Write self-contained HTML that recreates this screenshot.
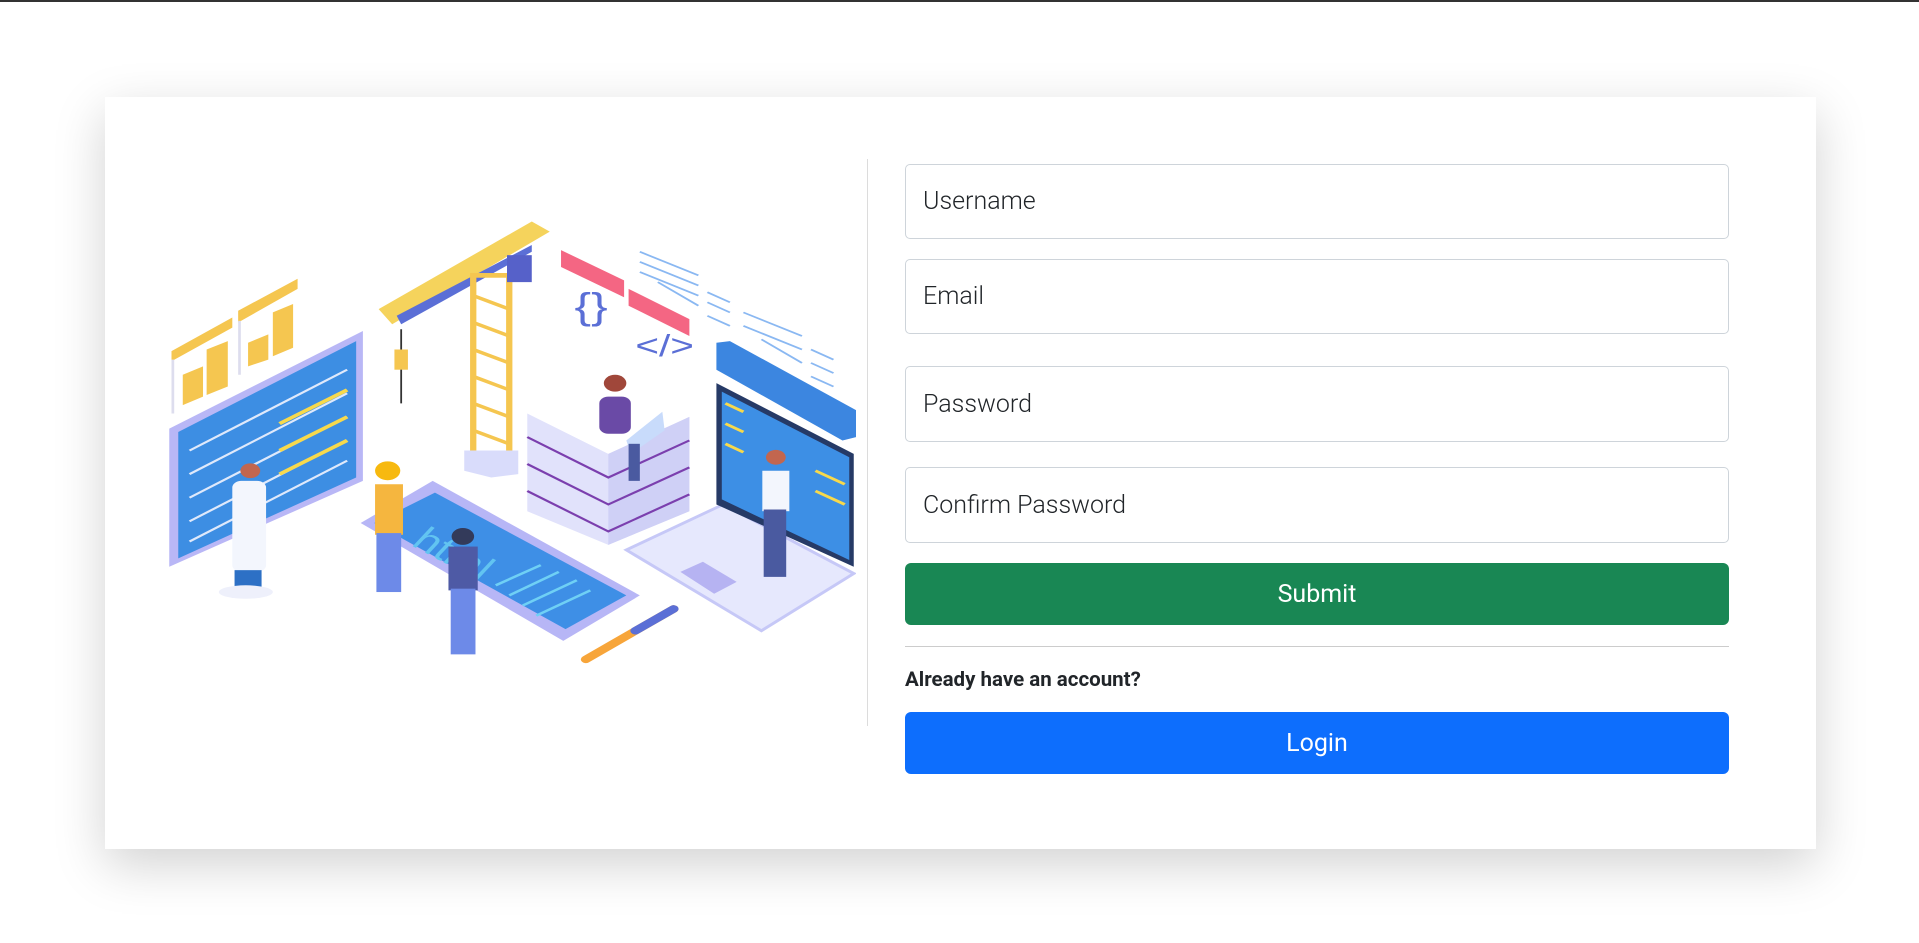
<!DOCTYPE html>
<html><head><meta charset="utf-8"><style>
*{box-sizing:border-box;margin:0;padding:0}
body{width:1919px;height:943px;background:#fff;font-family:Roboto,"Liberation Sans",sans-serif;position:relative;overflow:hidden}
.top{position:absolute;left:0;top:0;width:1919px;height:2px;background:#333}
.card{position:absolute;left:105px;top:97px;width:1711px;height:752px;background:#fff;box-shadow:0 16px 48px rgba(0,0,0,.18)}
.vline{position:absolute;left:867px;top:159px;width:1px;height:567px;background:#dcdcdc}
.inp{position:absolute;left:905px;width:824px;border:1px solid #ced4da;border-radius:5px;font-size:25px;color:#212529;padding-left:17px;display:flex;align-items:center;font-weight:300}
.btn{position:absolute;left:905px;width:824px;border-radius:6px;color:#fff;font-size:25px;display:flex;align-items:center;justify-content:center}
</style></head><body>
<div class="top"></div>
<div class="card"></div>
<svg style="position:absolute;left:158px;top:208px" width="698" height="475" viewBox="0 0 1550 1410" preserveAspectRatio="none">
<polygon points="25,655 455,365 455,810 25,1065" fill="#b9b7f6"/>
<polygon points="45,665 440,395 440,800 45,1040" fill="#3d8ee3"/>
<g stroke="#dfe9fb" stroke-width="6">
<line x1="70" y1="720" x2="420" y2="480"/><line x1="70" y1="790" x2="420" y2="550"/><line x1="70" y1="860" x2="420" y2="620"/><line x1="70" y1="930" x2="420" y2="690"/><line x1="70" y1="990" x2="420" y2="750"/></g>
<g stroke="#f7d94c" stroke-width="10"><line x1="270" y1="640" x2="420" y2="540"/><line x1="270" y1="720" x2="420" y2="620"/><line x1="270" y1="790" x2="420" y2="690"/></g>
<polygon points="30,425 165,325 165,355 30,455" fill="#f5c650"/><rect x="30" y="450" width="6" height="160" fill="#dde"/>
<polygon points="55,495 100,470 100,560 55,585" fill="#f5c650"/><polygon points="108,420 155,395 155,530 108,555" fill="#f5c650"/>
<polygon points="178,305 310,210 310,240 178,340" fill="#f5c650"/><rect x="178" y="335" width="6" height="160" fill="#dde"/>
<polygon points="200,400 245,375 245,450 200,470" fill="#f5c650"/><polygon points="255,310 300,285 300,415 255,440" fill="#f5c650"/>
<polygon points="490,300 830,40 870,70 520,345" fill="#f5d35c"/>
<polygon points="530,320 830,110 830,130 540,345" fill="#5b6fd6"/>
<rect x="700" y="200" width="80" height="550" fill="none" stroke="#f5c650" stroke-width="14"/>
<g stroke="#f5c650" stroke-width="10"><line x1="700" y1="260" x2="780" y2="300"/><line x1="700" y1="340" x2="780" y2="380"/><line x1="700" y1="420" x2="780" y2="460"/><line x1="700" y1="500" x2="780" y2="540"/><line x1="700" y1="580" x2="780" y2="620"/><line x1="700" y1="660" x2="780" y2="700"/></g>
<polygon points="680,720 800,720 800,790 740,800 680,780" fill="#d9dcfb"/>
<rect x="775" y="140" width="55" height="80" fill="#5661c9"/>
<line x1="540" y1="360" x2="540" y2="580" stroke="#333" stroke-width="4"/><rect x="525" y="420" width="30" height="60" fill="#f5c650"/>
<polygon points="895,125 1035,215 1035,265 895,175" fill="#f46683"/>
<polygon points="1045,240 1180,330 1180,380 1045,290" fill="#f46683"/>
<text x="925" y="330" font-size="110" fill="#5b6fd6" font-family="Liberation Sans">{}</text>
<text x="1060" y="440" font-size="90" fill="#5b6fd6" font-family="Liberation Sans">&lt;/&gt;</text>
<g stroke="#8ab8f2" stroke-width="5">
<line x1="1070" y1="130" x2="1200" y2="200"/><line x1="1070" y1="160" x2="1200" y2="230"/><line x1="1070" y1="190" x2="1200" y2="260"/><line x1="1110" y1="220" x2="1200" y2="290"/>
<line x1="1220" y1="250" x2="1270" y2="280"/><line x1="1220" y1="280" x2="1270" y2="310"/><line x1="1220" y1="320" x2="1270" y2="350"/>
<line x1="1300" y1="310" x2="1430" y2="380"/><line x1="1300" y1="350" x2="1430" y2="420"/><line x1="1340" y1="390" x2="1430" y2="460"/>
<line x1="1450" y1="420" x2="1500" y2="450"/><line x1="1450" y1="460" x2="1500" y2="490"/><line x1="1450" y1="500" x2="1500" y2="530"/></g>
<polygon points="1240,400 1270,395 1550,600 1550,680 1520,690 1240,480" fill="#3c86e0"/>
<polygon points="820,610 1000,730 1180,620 1180,900 1000,1000 820,900" fill="#e1e2fb"/>
<polygon points="1000,730 1180,620 1180,900 1000,1000" fill="#cfd0f6"/>
<g stroke="#7b3fae" stroke-width="6"><polyline points="820,680 1000,800 1180,690" fill="none"/><polyline points="820,760 1000,880 1180,770" fill="none"/><polyline points="820,840 1000,960 1180,850" fill="none"/></g>
<circle cx="1015" cy="520" r="25" fill="#a0473a"/>
<rect x="980" y="560" width="70" height="110" rx="20" fill="#6a4aa6"/>
<polygon points="1040,690 1120,605 1125,660 1050,730" fill="#c8dbfb"/>
<rect x="1045" y="700" width="25" height="110" fill="#4a5aa0"/>
<polygon points="450,935 610,810 1070,1150 900,1285" fill="#b7b6f6"/>
<polygon points="480,935 615,845 1040,1150 905,1250" fill="#3e8fe6"/>
<g stroke="#6fd0f5" stroke-width="7"><line x1="750" y1="1120" x2="850" y2="1060"/><line x1="780" y1="1150" x2="890" y2="1080"/><line x1="810" y1="1180" x2="930" y2="1105"/><line x1="840" y1="1210" x2="960" y2="1135"/></g>
<text x="560" y="1000" font-size="100" fill="#62c4f1" transform="rotate(35 560 1000)" font-family="Liberation Sans">html</text>
<polygon points="1040,1015 1255,880 1545,1085 1340,1255" fill="#e6e8fd" stroke="#c6c8f7" stroke-width="8"/>
<polygon points="1160,1080 1210,1050 1285,1110 1235,1145" fill="#b6b3f2"/>
<polygon points="1240,520 1545,730 1545,1065 1240,880" fill="#263a66"/>
<polygon points="1252,545 1535,740 1535,1045 1252,865" fill="#3d8fe5"/>
<g stroke="#f7d94c" stroke-width="8"><line x1="1260" y1="580" x2="1300" y2="605"/><line x1="1260" y1="640" x2="1300" y2="665"/><line x1="1260" y1="700" x2="1300" y2="725"/><line x1="1460" y1="780" x2="1525" y2="820"/><line x1="1460" y1="840" x2="1525" y2="880"/></g>
<line x1="950" y1="1340" x2="1145" y2="1190" stroke="#f7a53a" stroke-width="22" stroke-linecap="round"/>
<line x1="1060" y1="1255" x2="1145" y2="1190" stroke="#5b6fd6" stroke-width="22" stroke-linecap="round"/>
<circle cx="205" cy="780" r="22" fill="#c2664f"/><rect x="165" y="810" width="75" height="270" rx="20" fill="#f3f6fd"/><rect x="170" y="1075" width="60" height="50" fill="#2d70c5"/>
<ellipse cx="195" cy="1140" rx="60" ry="20" fill="#eef0fb"/>
<circle cx="510" cy="780" r="28" fill="#f7b90f"/><rect x="482" y="820" width="62" height="150" fill="#f5b63f"/><rect x="485" y="965" width="55" height="175" fill="#6d8ae8"/>
<circle cx="677" cy="975" r="25" fill="#333a5a"/><rect x="645" y="1005" width="65" height="130" fill="#4e5aa5"/><rect x="650" y="1130" width="55" height="195" fill="#6d8ae8"/>
<circle cx="1372" cy="740" r="22" fill="#c2664f"/><rect x="1342" y="780" width="60" height="120" fill="#f3f6fd"/><rect x="1345" y="895" width="50" height="200" fill="#4a5aa0"/>
</svg>
<div class="vline"></div>
<div class="inp" style="top:164px;height:75px">Username</div>
<div class="inp" style="top:259px;height:75px">Email</div>
<div class="inp" style="top:366px;height:76px">Password</div>
<div class="inp" style="top:467px;height:76px">Confirm Password</div>
<div class="btn" style="top:563px;height:62px;background:#198754">Submit</div>
<div style="position:absolute;left:905px;top:646px;width:824px;height:1px;background:#ccc"></div>
<div style="position:absolute;left:905px;top:668px;font-size:20.5px;font-weight:bold;color:#212529">Already have an account?</div>
<div class="btn" style="top:712px;height:62px;background:#0d6efd">Login</div>
</body></html>
